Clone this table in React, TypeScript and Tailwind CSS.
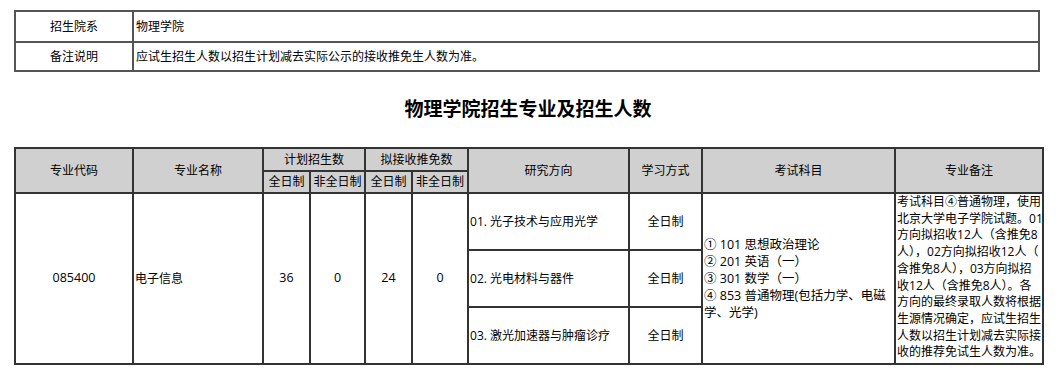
const font = { fontFamily: '"Open Sans", "Noto Sans CJK SC", sans-serif' };

const remarkLines = [
  "考试科目④普通物理，使用",
  "北京大学电子学院试题。01",
  "方向拟招收12人（含推免8",
  "人），02方向拟招收12人（",
  "含推免8人），03方向拟招",
  "收12人（含推免8人）。各",
  "方向的最终录取人数将根据",
  "生源情况确定，应试生招生",
  "人数以招生计划减去实际接",
  "收的推荐免试生人数为准。",
];

const examLines = [
  "① 101 思想政治理论",
  "② 201 英语（一）",
  "③ 301 数学（一）",
  "④ 853 普通物理(包括力学、电磁",
  "学、光学)",
];

const directions = ["01. 光子技术与应用光学", "02. 光电材料与器件", "03. 激光加速器与肿瘤诊疗"];

export default function App() {
  const th = "border-2 border-[#333] bg-[#d0d0d0] font-normal text-center p-0";
  const td = "border-2 border-[#333] p-0";

  return (
    <div className="w-[1062px] h-[370px] bg-white pl-[14px] pt-[10px] text-[12px] text-black" style={font}>
      {/* 基本信息 */}
      <table className="w-[1026px] table-fixed border-collapse">
        <colgroup>
          <col className="w-[118px]" />
          <col />
        </colgroup>
        <tbody>
          <tr className="h-[31px]">
            <td className="border-2 border-[#555] text-center">招生院系</td>
            <td className="border-2 border-[#555] pl-[2px]">物理学院</td>
          </tr>
          <tr className="h-[29px]">
            <td className="border-2 border-[#555] text-center">备注说明</td>
            <td className="border-2 border-[#555] pl-[2px]">应试生招生人数以招生计划减去实际公示的接收推免生人数为准。</td>
          </tr>
        </tbody>
      </table>

      <div className="w-[1028px] h-[75px] flex items-center justify-center text-[19px] font-bold">
        物理学院招生专业及招生人数
      </div>

      {/* 专业表 */}
      <table className="w-[1028px] table-fixed border-collapse">
        <colgroup>
          <col className="w-[118px]" />
          <col className="w-[130px]" />
          <col className="w-[47px]" />
          <col className="w-[55px]" />
          <col className="w-[47px]" />
          <col className="w-[56px]" />
          <col className="w-[161px]" />
          <col className="w-[73px]" />
          <col className="w-[193px]" />
          <col className="w-[148px]" />
        </colgroup>
        <thead>
          <tr className="h-[23px]">
            <th rowSpan={2} className={th}>专业代码</th>
            <th rowSpan={2} className={th}>专业名称</th>
            <th colSpan={2} className={th}>计划招生数</th>
            <th colSpan={2} className={th}>拟接收推免数</th>
            <th rowSpan={2} className={th}>研究方向</th>
            <th rowSpan={2} className={th}>学习方式</th>
            <th rowSpan={2} className={th}>考试科目</th>
            <th rowSpan={2} className={th}>专业备注</th>
          </tr>
          <tr className="h-[22px]">
            <th className={th}>全日制</th>
            <th className={th}>非全日制</th>
            <th className={th}>全日制</th>
            <th className={th}>非全日制</th>
          </tr>
        </thead>
        <tbody>
          {directions.map((d, i) => (
            <tr key={d} className="h-[57px]">
              {i === 0 && (
                <>
                  <td rowSpan={3} className={`${td} text-center text-[12.5px]`}>085400</td>
                  <td rowSpan={3} className={`${td} pl-[1px]`}>电子信息</td>
                  <td rowSpan={3} className={`${td} text-center text-[12.5px]`}>36</td>
                  <td rowSpan={3} className={`${td} text-center text-[12.5px]`}>0</td>
                  <td rowSpan={3} className={`${td} text-center text-[12.5px]`}>24</td>
                  <td rowSpan={3} className={`${td} text-center text-[12.5px]`}>0</td>
                </>
              )}
              <td className={`${td} pl-[1px] whitespace-nowrap`}>{d}</td>
              <td className={`${td} text-center`}>全日制</td>
              {i === 0 && (
                <>
                  <td rowSpan={3} className={`${td} pl-[1px] leading-[17px] text-[12.5px]`}>
                    {examLines.map((l) => (
                      <div key={l} className="whitespace-nowrap">{l}</div>
                    ))}
                  </td>
                  <td rowSpan={3} className={`${td} align-top pl-[1px] leading-[16.7px] overflow-hidden`}>
                    {remarkLines.map((l) => (
                      <div key={l} className="whitespace-nowrap">{l}</div>
                    ))}
                  </td>
                </>
              )}
            </tr>
          ))}
        </tbody>
      </table>
    </div>
  );
}
